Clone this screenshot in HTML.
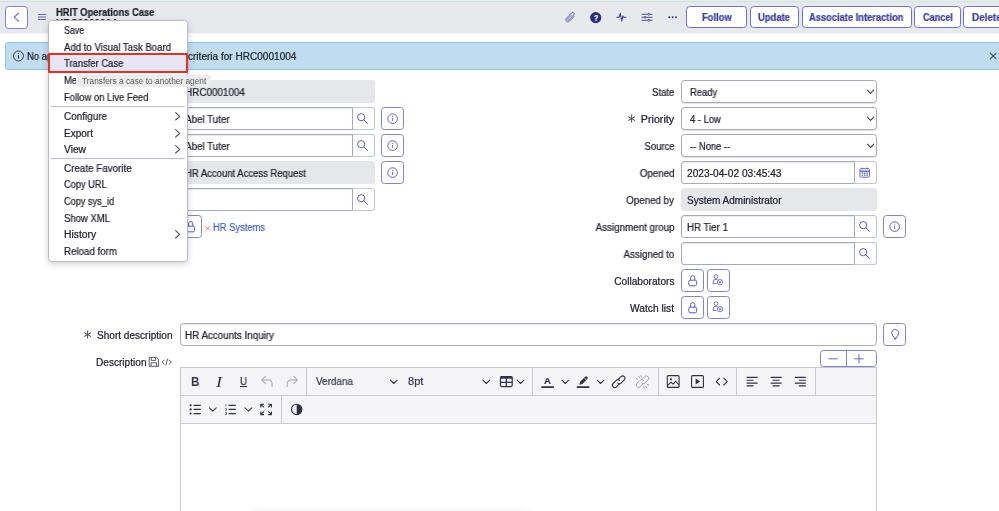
<!DOCTYPE html>
<html lang="en"><head><meta charset="utf-8"><title>HRIT Operations Case | HRC0001004</title>
<style>
html,body{margin:0;padding:0;}
body{width:999px;height:511px;overflow:hidden;position:relative;background:#fff;font-family:"Liberation Sans", sans-serif;}
.t{font-family:"Liberation Sans", sans-serif;}
svg{position:absolute;overflow:visible;}

.in{position:absolute;box-sizing:border-box;background:#fff;border:1px solid #a6a9b9;border-radius:3.5px;box-shadow:inset 0 1px 1px rgba(0,0,0,.09);}
.ro{position:absolute;box-sizing:border-box;background:#e6e7eb;border-radius:3px;}
.ad{position:absolute;box-sizing:border-box;background:#fff;border:1px solid #c4c6d2;border-left:1px solid #a6a9b9;border-radius:0 3px 3px 0;}
.bt{position:absolute;box-sizing:border-box;background:#fff;border:1px solid #7f82d6;border-radius:3.5px;}
.ln{position:absolute;background:#c9cad5;}
.t{-webkit-text-stroke:0.22px currentColor;will-change:transform;}

</style></head><body>
<div style="position:absolute;left:0px;top:0px;width:999px;height:33px;background:#e8e9ed;"></div><div style="position:absolute;left:0px;top:33px;width:999px;height:1px;background:#f6f6f8;"></div><div style="position:absolute;left:0px;top:0px;width:999px;height:1px;background:#dff0ee;"></div><div style="position:absolute;left:0px;top:1px;width:999px;height:1px;background:#d6e2e2;"></div><div class="bt" style="left:5px;top:6px;width:23px;height:23px;"></div><svg style="left:0;top:0" width="40" height="34"><path d="M18.7 13 L14.2 17.2 L18.7 21.4" fill="none" stroke="#6a6dcc" stroke-width="1.1" stroke-linecap="round" stroke-linejoin="round"/></svg><svg style="left:0;top:0" width="60" height="34"><path d="M38 14.5h8M38 17h8M38 19.5h8" stroke="#6163b8" stroke-width="1.1" fill="none"/></svg><span class="t" style="position:absolute;top:7.80px;font-size:10px;line-height:1;font-weight:700;color:#20212e;white-space:pre;left:56.4px;transform-origin:0 50%;transform:scaleX(0.9309);">HRIT Operations Case</span><span class="t" style="position:absolute;top:18.80px;font-size:10px;line-height:1;font-weight:700;color:#20212e;white-space:pre;left:56.4px;transform-origin:0 50%;transform:scaleX(1.0048);">HRC0001004</span><svg style="left:0;top:0" width="999" height="34">
<g fill="none" stroke="#5d60b5" stroke-width="0.9" stroke-linecap="round" stroke-linejoin="round">
<path transform="translate(570.3 17.3) rotate(45)" d="M2.1 -3.2V3.4A2.1 2.1 0 0 1 -2.1 3.4V-4.2A1.45 1.45 0 0 1 0.8 -4.2V3A0.8 0.8 0 0 1 -0.8 3V-2.6"/>
</g>
<circle cx="595.7" cy="17.6" r="5.6" fill="#2b2d80"/>
<g fill="none" stroke="#3b3d96" stroke-width="1.1" stroke-linecap="round" stroke-linejoin="round">
<path d="M616.8 17.2 h2.3 l1.2 -3.8 l1.4 7.6 l1.3 -5 l0.8 1.2 h2.2"/>
<path d="M642 14.3h10M642 17.3h10M642 20.3h10" stroke-width="0.9"/>
</g>
<g fill="#e8e9ed" stroke="#3b3d96" stroke-width="0.8"><circle cx="648.8" cy="14.3" r="0.9"/><circle cx="645" cy="17.3" r="0.9"/><circle cx="648.8" cy="20.3" r="0.9"/></g>
<g fill="#2b2d80"><circle cx="669.2" cy="17.2" r="0.95"/><circle cx="672.6" cy="17.2" r="0.95"/><circle cx="676" cy="17.2" r="0.95"/></g>
</svg><span class="t" style="position:absolute;top:14.05px;font-size:8.5px;line-height:1;font-weight:700;color:#ffffff;white-space:pre;left:593.6px;transform-origin:0 50%;transform:scaleX(0.8264);">?</span><div class="bt" style="left:686px;top:6px;width:61px;height:22px;border-color:#6e71cf;"></div><span class="t" style="position:absolute;top:12.80px;font-size:10px;line-height:1;font-weight:700;color:#3d40a2;white-space:pre;left:702px;transform-origin:0 50%;transform:scaleX(0.9377);">Follow</span><div class="bt" style="left:750px;top:6px;width:49px;height:22px;border-color:#6e71cf;"></div><span class="t" style="position:absolute;top:12.80px;font-size:10px;line-height:1;font-weight:700;color:#3d40a2;white-space:pre;left:758px;transform-origin:0 50%;transform:scaleX(0.9438);">Update</span><div class="bt" style="left:802px;top:6px;width:110px;height:22px;border-color:#6e71cf;"></div><span class="t" style="position:absolute;top:12.80px;font-size:10px;line-height:1;font-weight:700;color:#3d40a2;white-space:pre;left:809.2px;transform-origin:0 50%;transform:scaleX(0.9332);">Associate Interaction</span><div class="bt" style="left:914px;top:6px;width:47px;height:22px;border-color:#6e71cf;"></div><span class="t" style="position:absolute;top:12.80px;font-size:10px;line-height:1;font-weight:700;color:#3d40a2;white-space:pre;left:922.6px;transform-origin:0 50%;transform:scaleX(0.9117);">Cancel</span><div class="bt" style="left:963px;top:6px;width:47px;height:22px;border-color:#6e71cf;"></div><span class="t" style="position:absolute;top:12.80px;font-size:10px;line-height:1;font-weight:700;color:#3d40a2;white-space:pre;left:971.6px;transform-origin:0 50%;transform:scaleX(0.9862);">Delete</span><div style="position:absolute;box-sizing:border-box;left:5px;top:42px;width:1010px;height:28px;background:#bfdcf1;border:1px solid #8ec4ea;border-radius:3px;"></div><svg style="left:0;top:0" width="999" height="80">
<circle cx="18.5" cy="56" r="5" fill="none" stroke="#2c2f45" stroke-width="0.9"/>
<path d="M18.5 55.2v3.4" stroke="#2c2f45" stroke-width="1" fill="none"/><circle cx="18.5" cy="53.5" r="0.6" fill="#2c2f45"/>
<path d="M990.1 52.9l6.3 6.3M996.4 52.9l-6.3 6.3" stroke="#3d3f8a" stroke-width="1.05" fill="none"/>
</svg><span class="t" style="position:absolute;top:51.80px;font-size:10px;line-height:1;font-weight:400;color:#20212e;white-space:pre;left:27.2px;transform-origin:0 50%;transform:scaleX(0.9400);">No agents satisfy the assignment</span><span class="t" style="position:absolute;top:51.80px;font-size:10px;line-height:1;font-weight:400;color:#20212e;white-space:pre;left:188.2px;transform-origin:0 50%;transform:scaleX(1.0053);">criteria for HRC0001004</span><div class="ro" style="left:180px;top:80px;width:194.5px;height:23px;"></div><span class="t" style="position:absolute;top:87.80px;font-size:10px;line-height:1;font-weight:400;color:#20212e;white-space:pre;left:185px;transform-origin:0 50%;transform:scaleX(0.9883);">HRC0001004</span><div class="in" style="left:180px;top:107px;width:173px;height:23px;border-radius:3px 0 0 3px;"></div><div class="ad" style="left:352px;top:107px;width:23px;height:23px;"></div><svg style="left:356.4px;top:112.3px" width="14" height="14"><circle cx="5.2" cy="5.2" r="3.6" fill="none" stroke="#5a5dc6" stroke-width="1"/><path d="M7.9 7.9l3.6 3.6" stroke="#5a5dc6" stroke-width="1" stroke-linecap="round"/></svg><div class="bt" style="left:381px;top:107px;width:23px;height:23px;"></div><svg style="left:380.9px;top:106.9px" width="24" height="24"><circle cx="11.6" cy="11.6" r="4.8" fill="none" stroke="#5a5dc6" stroke-width="0.95"/><path d="M11.6 10.8v3.2" stroke="#5a5dc6" stroke-width="0.9"/><circle cx="11.6" cy="9.2" r="0.55" fill="#5a5dc6"/></svg><span class="t" style="position:absolute;top:114.80px;font-size:10px;line-height:1;font-weight:400;color:#20212e;white-space:pre;left:185px;transform-origin:0 50%;transform:scaleX(0.9804);">Abel Tuter</span><div class="in" style="left:180px;top:134px;width:173px;height:23px;border-radius:3px 0 0 3px;"></div><div class="ad" style="left:352px;top:134px;width:23px;height:23px;"></div><svg style="left:356.4px;top:139.3px" width="14" height="14"><circle cx="5.2" cy="5.2" r="3.6" fill="none" stroke="#5a5dc6" stroke-width="1"/><path d="M7.9 7.9l3.6 3.6" stroke="#5a5dc6" stroke-width="1" stroke-linecap="round"/></svg><div class="bt" style="left:381px;top:134px;width:23px;height:23px;"></div><svg style="left:380.9px;top:133.9px" width="24" height="24"><circle cx="11.6" cy="11.6" r="4.8" fill="none" stroke="#5a5dc6" stroke-width="0.95"/><path d="M11.6 10.8v3.2" stroke="#5a5dc6" stroke-width="0.9"/><circle cx="11.6" cy="9.2" r="0.55" fill="#5a5dc6"/></svg><span class="t" style="position:absolute;top:141.80px;font-size:10px;line-height:1;font-weight:400;color:#20212e;white-space:pre;left:185px;transform-origin:0 50%;transform:scaleX(0.9804);">Abel Tuter</span><div class="ro" style="left:180px;top:161px;width:194.5px;height:23px;"></div><div class="bt" style="left:381px;top:161px;width:23px;height:23px;"></div><svg style="left:380.9px;top:160.9px" width="24" height="24"><circle cx="11.6" cy="11.6" r="4.8" fill="none" stroke="#5a5dc6" stroke-width="0.95"/><path d="M11.6 10.8v3.2" stroke="#5a5dc6" stroke-width="0.9"/><circle cx="11.6" cy="9.2" r="0.55" fill="#5a5dc6"/></svg><span class="t" style="position:absolute;top:168.80px;font-size:10px;line-height:1;font-weight:400;color:#20212e;white-space:pre;left:185px;transform-origin:0 50%;transform:scaleX(0.9490);">HR Account Access Request</span><div class="in" style="left:180px;top:188px;width:173px;height:23px;border-radius:3px 0 0 3px;"></div><div class="ad" style="left:352px;top:188px;width:23px;height:23px;"></div><svg style="left:356.4px;top:193.3px" width="14" height="14"><circle cx="5.2" cy="5.2" r="3.6" fill="none" stroke="#5a5dc6" stroke-width="1"/><path d="M7.9 7.9l3.6 3.6" stroke="#5a5dc6" stroke-width="1" stroke-linecap="round"/></svg><div class="bt" style="left:179px;top:215px;width:23px;height:23px;"></div><svg style="left:178.9px;top:215.1px" width="24" height="24"><rect x="7.8" y="11.2" width="7.8" height="5.6" rx="1.3" fill="none" stroke="#5a5dc6" stroke-width="1"/><path d="M9.6 11.2v-2.5a2.1 2.1 0 0 1 4.2 0v2.5" fill="none" stroke="#5a5dc6" stroke-width="1"/></svg><svg style="left:0;top:0" width="300" height="300"><path d="M205.8 226.4l4 4M209.8 226.4l-4 4" stroke="#ef6a6a" stroke-width="0.9"/></svg><span class="t" style="position:absolute;top:222.80px;font-size:10px;line-height:1;font-weight:400;color:#3f62d8;white-space:pre;left:213px;transform-origin:0 50%;transform:scaleX(0.9359);">HR Systems</span><span class="t" style="position:absolute;top:87.80px;font-size:10px;line-height:1;font-weight:400;color:#20212e;white-space:pre;right:324.70000000000005px;transform-origin:100% 50%;transform:scaleX(0.9546);">State</span><div class="in" style="left:681px;top:80px;width:196px;height:23px;box-shadow:0 1px 1px rgba(0,0,0,.12);"></div><svg style="left:864.8px;top:88px" width="10" height="8"><path d="M2.4 2.2l3.15 3.2l3.15-3.2" fill="none" stroke="#44465a" stroke-width="1.1" stroke-linecap="round" stroke-linejoin="round"/></svg><span class="t" style="position:absolute;top:87.80px;font-size:10px;line-height:1;font-weight:400;color:#20212e;white-space:pre;left:689.7px;transform-origin:0 50%;transform:scaleX(0.9400);">Ready</span><span class="t" style="position:absolute;top:114.80px;font-size:10px;line-height:1;font-weight:400;color:#20212e;white-space:pre;right:324.70000000000005px;transform-origin:100% 50%;transform:scaleX(1.0699);">Priority</span><div class="in" style="left:681px;top:107px;width:196px;height:23px;box-shadow:0 1px 1px rgba(0,0,0,.12);"></div><svg style="left:864.8px;top:115px" width="10" height="8"><path d="M2.4 2.2l3.15 3.2l3.15-3.2" fill="none" stroke="#44465a" stroke-width="1.1" stroke-linecap="round" stroke-linejoin="round"/></svg><span class="t" style="position:absolute;top:114.80px;font-size:10px;line-height:1;font-weight:400;color:#20212e;white-space:pre;left:689.7px;transform-origin:0 50%;transform:scaleX(0.9400);">4 - Low</span><svg style="left:627px;top:113.6px" width="10" height="10"><path d="M4.6 0.6v8M1.1 2.6l7 4M8.1 2.6l-7 4" stroke="#3f4154" stroke-width="0.95" fill="none"/></svg><span class="t" style="position:absolute;top:141.80px;font-size:10px;line-height:1;font-weight:400;color:#20212e;white-space:pre;right:324.70000000000005px;transform-origin:100% 50%;transform:scaleX(0.9562);">Source</span><div class="in" style="left:681px;top:134px;width:196px;height:23px;box-shadow:0 1px 1px rgba(0,0,0,.12);"></div><svg style="left:864.8px;top:142px" width="10" height="8"><path d="M2.4 2.2l3.15 3.2l3.15-3.2" fill="none" stroke="#44465a" stroke-width="1.1" stroke-linecap="round" stroke-linejoin="round"/></svg><span class="t" style="position:absolute;top:141.80px;font-size:10px;line-height:1;font-weight:400;color:#20212e;white-space:pre;left:689.7px;transform-origin:0 50%;transform:scaleX(0.9400);">-- None --</span><span class="t" style="position:absolute;top:168.80px;font-size:10px;line-height:1;font-weight:400;color:#20212e;white-space:pre;right:324.70000000000005px;transform-origin:100% 50%;transform:scaleX(0.9777);">Opened</span><div class="in" style="left:681px;top:161px;width:174px;height:23px;border-radius:3px 0 0 3px;"></div><div class="ad" style="left:854px;top:161px;width:23px;height:23px;"></div><svg style="left:858.7px;top:166.6px" width="12" height="12"><rect x="0.9" y="1.6" width="9.6" height="8.6" rx="1.2" fill="none" stroke="#5a5dc6" stroke-width="0.9"/><path d="M0.9 4.2h9.6" stroke="#5a5dc6" stroke-width="1.3"/><path d="M3.2 0.6v1.8M8.2 0.6v1.8" stroke="#5a5dc6" stroke-width="0.9"/><path d="M2.6 6.1h1.5M5 6.1h1.5M7.4 6.1h1.5M2.6 8.1h1.5M5 8.1h1.5M7.4 8.1h1.5" stroke="#5a5dc6" stroke-width="1.1"/></svg><span class="t" style="position:absolute;top:168.80px;font-size:10px;line-height:1;font-weight:400;color:#20212e;white-space:pre;left:686.5px;transform-origin:0 50%;transform:scaleX(1.0177);">2023-04-02 03:45:43</span><span class="t" style="position:absolute;top:195.80px;font-size:10px;line-height:1;font-weight:400;color:#20212e;white-space:pre;right:324.70000000000005px;transform-origin:100% 50%;transform:scaleX(0.9747);">Opened by</span><div class="ro" style="left:681px;top:188px;width:195.5px;height:23px;"></div><span class="t" style="position:absolute;top:195.80px;font-size:10px;line-height:1;font-weight:400;color:#20212e;white-space:pre;left:686.5px;transform-origin:0 50%;transform:scaleX(1.0002);">System Administrator</span><span class="t" style="position:absolute;top:222.80px;font-size:10px;line-height:1;font-weight:400;color:#20212e;white-space:pre;right:324.70000000000005px;transform-origin:100% 50%;transform:scaleX(0.9800);">Assignment group</span><div class="in" style="left:681px;top:215px;width:174px;height:23px;border-radius:3px 0 0 3px;"></div><div class="ad" style="left:854px;top:215px;width:23px;height:23px;"></div><svg style="left:858.4px;top:220.3px" width="14" height="14"><circle cx="5.2" cy="5.2" r="3.6" fill="none" stroke="#5a5dc6" stroke-width="1"/><path d="M7.9 7.9l3.6 3.6" stroke="#5a5dc6" stroke-width="1" stroke-linecap="round"/></svg><div class="bt" style="left:883px;top:215px;width:23px;height:23px;"></div><svg style="left:882.9px;top:214.9px" width="24" height="24"><circle cx="11.6" cy="11.6" r="4.8" fill="none" stroke="#5a5dc6" stroke-width="0.95"/><path d="M11.6 10.8v3.2" stroke="#5a5dc6" stroke-width="0.9"/><circle cx="11.6" cy="9.2" r="0.55" fill="#5a5dc6"/></svg><span class="t" style="position:absolute;top:222.80px;font-size:10px;line-height:1;font-weight:400;color:#20212e;white-space:pre;left:686.5px;transform-origin:0 50%;transform:scaleX(0.9684);">HR Tier 1</span><span class="t" style="position:absolute;top:249.80px;font-size:10px;line-height:1;font-weight:400;color:#20212e;white-space:pre;right:324.70000000000005px;transform-origin:100% 50%;transform:scaleX(0.9700);">Assigned to</span><div class="in" style="left:681px;top:242px;width:174px;height:23px;border-radius:3px 0 0 3px;"></div><div class="ad" style="left:854px;top:242px;width:23px;height:23px;"></div><svg style="left:858.4px;top:247.3px" width="14" height="14"><circle cx="5.2" cy="5.2" r="3.6" fill="none" stroke="#5a5dc6" stroke-width="1"/><path d="M7.9 7.9l3.6 3.6" stroke="#5a5dc6" stroke-width="1" stroke-linecap="round"/></svg><span class="t" style="position:absolute;top:276.80px;font-size:10px;line-height:1;font-weight:400;color:#20212e;white-space:pre;right:324.70000000000005px;transform-origin:100% 50%;transform:scaleX(1.0137);">Collaborators</span><div class="bt" style="left:681px;top:269px;width:23px;height:23px;"></div><svg style="left:680.9px;top:268.9px" width="24" height="24"><rect x="7.8" y="11.2" width="7.8" height="5.6" rx="1.3" fill="none" stroke="#5a5dc6" stroke-width="1"/><path d="M9.6 11.2v-2.5a2.1 2.1 0 0 1 4.2 0v2.5" fill="none" stroke="#5a5dc6" stroke-width="1"/></svg><div class="bt" style="left:707px;top:269px;width:23px;height:23px;"></div><svg style="left:706.1px;top:268.4px" width="24" height="24"><circle cx="10" cy="8.6" r="1.9" fill="none" stroke="#5a5dc6" stroke-width="0.85"/><path d="M7.2 15.6v-1.6a2.6 2.6 0 0 1 2.8 -2.6a3 3 0 0 1 1.6 0.4" fill="none" stroke="#5a5dc6" stroke-width="0.85"/><path d="M7.2 15.6h3.4" stroke="#5a5dc6" stroke-width="0.85"/><circle cx="14" cy="14.2" r="2.7" fill="none" stroke="#5a5dc6" stroke-width="0.8"/><path d="M14 12.8v2.8M12.6 14.2h2.8" stroke="#5a5dc6" stroke-width="0.8"/></svg><span class="t" style="position:absolute;top:303.80px;font-size:10px;line-height:1;font-weight:400;color:#20212e;white-space:pre;right:324.70000000000005px;transform-origin:100% 50%;transform:scaleX(1.0217);">Watch list</span><div class="bt" style="left:681px;top:296px;width:23px;height:23px;"></div><svg style="left:680.9px;top:295.9px" width="24" height="24"><rect x="7.8" y="11.2" width="7.8" height="5.6" rx="1.3" fill="none" stroke="#5a5dc6" stroke-width="1"/><path d="M9.6 11.2v-2.5a2.1 2.1 0 0 1 4.2 0v2.5" fill="none" stroke="#5a5dc6" stroke-width="1"/></svg><div class="bt" style="left:707px;top:296px;width:23px;height:23px;"></div><svg style="left:706.1px;top:295.4px" width="24" height="24"><circle cx="10" cy="8.6" r="1.9" fill="none" stroke="#5a5dc6" stroke-width="0.85"/><path d="M7.2 15.6v-1.6a2.6 2.6 0 0 1 2.8 -2.6a3 3 0 0 1 1.6 0.4" fill="none" stroke="#5a5dc6" stroke-width="0.85"/><path d="M7.2 15.6h3.4" stroke="#5a5dc6" stroke-width="0.85"/><circle cx="14" cy="14.2" r="2.7" fill="none" stroke="#5a5dc6" stroke-width="0.8"/><path d="M14 12.8v2.8M12.6 14.2h2.8" stroke="#5a5dc6" stroke-width="0.8"/></svg><svg style="left:83.4px;top:330.4px" width="10" height="10"><path d="M4.6 0.6v8M1.1 2.6l7 4M8.1 2.6l-7 4" stroke="#3f4154" stroke-width="0.95" fill="none"/></svg><span class="t" style="position:absolute;top:330.80px;font-size:10px;line-height:1;font-weight:400;color:#20212e;white-space:pre;left:97px;transform-origin:0 50%;transform:scaleX(1.0060);">Short description</span><div class="in" style="left:180px;top:323px;width:697px;height:23px;"></div><span class="t" style="position:absolute;top:330.80px;font-size:10px;line-height:1;font-weight:400;color:#20212e;white-space:pre;left:185px;transform-origin:0 50%;transform:scaleX(0.9822);">HR Accounts Inquiry</span><div class="bt" style="left:883px;top:323px;width:23px;height:23px;"></div><svg style="left:882.6px;top:323px" width="24" height="24"><path d="M12.2 16.4L9.35 12A3.5 3.5 0 1 1 15.05 12Z" fill="none" stroke="#5a5dc6" stroke-width="0.95" stroke-linejoin="round"/><path d="M12.2 16.4l-1-1.6h2z" fill="#5a5dc6"/></svg><span class="t" style="position:absolute;top:357.80px;font-size:10px;line-height:1;font-weight:400;color:#20212e;white-space:pre;left:96px;transform-origin:0 50%;transform:scaleX(1.0094);">Description</span><svg style="left:148px;top:355px" width="30" height="14"><g fill="none" stroke="#4b4d60" stroke-width="0.9" stroke-linejoin="round"><path d="M1.2 2.4h7.4l1.9 1.9v7h-9.3z"/><path d="M3.2 2.4v3h4.4v-3M3 11.3V7.8h5.6v3.5"/><path d="M16.4 4.8l-2.3 2.3l2.3 2.3M21 4.8l2.3 2.3l-2.3 2.3M19.7 3.8l-2 6.6"/></g></svg><div class="bt" style="left:820px;top:350px;width:57px;height:17px;"></div><div style="position:absolute;left:846px;top:350px;width:1px;height:17px;background:#7f82d6;"></div><svg style="left:820px;top:350px" width="57" height="18"><path d="M8.4 8.8h9.4M34.3 8.8h9.4M39 4.2v9.2" stroke="#5a5dc6" stroke-width="0.95" fill="none"/></svg><div style="position:absolute;box-sizing:border-box;left:180px;top:367px;width:697px;height:160px;border:1px solid #c6c8d3;background:#fff;"></div><div style="position:absolute;left:181px;top:368px;width:695px;height:55px;background:#f5f5f8;"></div><div class="ln" style="left:181px;top:395px;width:695px;height:1px;"></div><div class="ln" style="left:181px;top:423px;width:695px;height:1px;"></div><div class="ln" style="left:306px;top:368px;width:1px;height:27px;"></div><div class="ln" style="left:532px;top:368px;width:1px;height:27px;"></div><div class="ln" style="left:658px;top:368px;width:1px;height:27px;"></div><div class="ln" style="left:736px;top:368px;width:1px;height:27px;"></div><div class="ln" style="left:815px;top:368px;width:1px;height:27px;"></div><div class="ln" style="left:281px;top:396px;width:1px;height:27px;"></div><svg style="left:0;top:0" width="999" height="511"><g fill="none" stroke="#a0a2ae" stroke-width="1.05" stroke-linecap="round" stroke-linejoin="round"><path d="M265.4 376.4l-3.6 3.6l3.6 3.6"/><path d="M262 380h6.2a3.9 3.9 0 0 1 3.9 3.9v2.6"/><path d="M293.8 376.4l3.6 3.6l-3.6 3.6"/><path d="M297.2 380h-6.2a3.9 3.9 0 0 0 -3.9 3.9v2.6"/></g><path d="M240 386.5h7" stroke="#2e3245" stroke-width="1.1"/><path d="M390.4 380.2l3.4 3.3l3.4 -3.3" fill="none" stroke="#2e3245" stroke-width="1.05" stroke-linecap="round" stroke-linejoin="round"/><path d="M482.9 380.2l3.4 3.3l3.4 -3.3" fill="none" stroke="#2e3245" stroke-width="1.05" stroke-linecap="round" stroke-linejoin="round"/><path d="M517.2 380.2l3.4 3.3l3.4 -3.3" fill="none" stroke="#2e3245" stroke-width="1.05" stroke-linecap="round" stroke-linejoin="round"/><path d="M561.9 380.2l3.4 3.3l3.4 -3.3" fill="none" stroke="#2e3245" stroke-width="1.05" stroke-linecap="round" stroke-linejoin="round"/><path d="M597.2 380.2l3.4 3.3l3.4 -3.3" fill="none" stroke="#2e3245" stroke-width="1.05" stroke-linecap="round" stroke-linejoin="round"/><g fill="none" stroke="#2e3245" stroke-width="1.25" stroke-linejoin="round"><rect x="500.5" y="376.5" width="11.7" height="10" rx="1.2"/><path d="M500.5 382.4h11.7M506.35 378.4v8.1"/></g><rect x="500.5" y="376.5" width="11.7" height="2.2" fill="#2e3245"/><path d="M541.3 387.1h12.6M576.8 387.1h12.6" stroke="#2e3245" stroke-width="1.7"/><path d="M579.4 384.4l0.7-2.6l5-5a1.3 1.3 0 0 1 1.8 0l0.5 0.5a1.3 1.3 0 0 1 0 1.8l-5 5l-2.6 0.7z" fill="#2e3245"/><path d="M584 377.6l2.6 2.6" stroke="#f5f5f8" stroke-width="0.7"/><g fill="none" stroke="#2e3245" stroke-width="1.15" stroke-linecap="round"><path d="M618.4 379.2l2.6-2.6a2.3 2.3 0 0 1 3.3 3.3l-3.2 3.2a2.3 2.3 0 0 1 -3.3 0"/><path d="M619 384.2l-2.6 2.6a2.3 2.3 0 0 1 -3.3 -3.3l3.2-3.2a2.3 2.3 0 0 1 3.3 0"/></g><g fill="none" stroke="#a0a2ae" stroke-width="1.0" stroke-linecap="round"><path d="M642.2 379.2l2.6-2.6a2.3 2.3 0 0 1 3.3 3.3l-3.2 3.2a2.3 2.3 0 0 1 -3.3 0"/><path d="M642.8 384.2l-2.6 2.6a2.3 2.3 0 0 1 -3.3 -3.3l3.2-3.2a2.3 2.3 0 0 1 3.3 0"/><path d="M638.6 376.2l1 1.4M636.4 378.6l1.5 0.8M641 375.6l0.3 1.5M646.6 387.6l-1-1.4M648.8 385.2l-1.5-0.8M644.2 388.2l-0.3-1.5"/></g><g fill="none" stroke="#2e3245" stroke-width="1.1" stroke-linejoin="round"><rect x="667.3" y="375.6" width="11.8" height="11.8" rx="1"/><path d="M667.6 385.6l3.4-3.4l2 2l2.6-2.8l3.3 3.3"/></g><circle cx="671" cy="379.3" r="1.1" fill="#2e3245"/><rect x="691.6" y="375.6" width="11.8" height="11.8" rx="1" fill="none" stroke="#2e3245" stroke-width="1.1"/><path d="M695.6 378.6l4.6 2.9l-4.6 2.9z" fill="#2e3245"/><g fill="none" stroke="#2e3245" stroke-width="1.1" stroke-linecap="round" stroke-linejoin="round"><path d="M719.6 378.2l-3.4 3.4l3.4 3.4M723.8 378.2l3.4 3.4l-3.4 3.4"/></g><g stroke="#2e3245" stroke-width="1.1" fill="none"><path d="M746.6 377.4h11M746.6 380.3h7M746.6 383.1h11M746.6 385.9h7"/><path d="M770.6 377.4h11M772.6 380.3h7M770.6 383.1h11M772.6 385.9h7"/><path d="M794.8 377.4h11M798.8 380.3h7M794.8 383.1h11M798.8 385.9h7"/></g><g stroke="#2e3245" stroke-width="1.25" fill="none"><path d="M193.6 405.3h7.2M193.6 409.4h7.2M193.6 413.5h7.2"/><path d="M228.6 405.3h7.2M228.6 409.4h7.2M228.6 413.5h7.2"/></g><g fill="#2e3245"><circle cx="190.6" cy="405.3" r="1.1"/><circle cx="190.6" cy="409.4" r="1.1"/><circle cx="190.6" cy="413.5" r="1.1"/></g><path d="M225.8 404.2v2.2M225.2 408.4h1.2v2h-1.2M225.2 412.4h1.2v2.2h-1.2" stroke="#2e3245" stroke-width="0.7" fill="none"/><path d="M209.4 407.8l3.4 3.3l3.4 -3.3" fill="none" stroke="#2e3245" stroke-width="1.05" stroke-linecap="round" stroke-linejoin="round"/><path d="M245 407.8l3.4 3.3l3.4 -3.3" fill="none" stroke="#2e3245" stroke-width="1.05" stroke-linecap="round" stroke-linejoin="round"/><g fill="none" stroke="#2e3245" stroke-width="1.1" stroke-linejoin="round"><path d="M260.8 407.4v-3.2h3.2M261 404.4l3 3M268.2 404.2h3.2v3.2M271.2 404.4l-3 3M260.8 411.4v3.2h3.2M261 414.4l3-3M268.2 414.6h3.2v-3.2M271.2 414.4l-3-3"/></g><circle cx="296.7" cy="409.4" r="5.2" fill="none" stroke="#2e3245" stroke-width="1.1"/><path d="M296.7 404.2a5.2 5.2 0 0 1 0 10.4z" fill="#2e3245"/></svg><span class="t" style="position:absolute;top:376.40px;font-size:12.8px;line-height:1;font-weight:700;color:#2e3245;white-space:pre;-webkit-text-stroke:0;left:191px;transform-origin:0 50%;transform:scaleX(0.9081);">B</span><span class="t" style="position:absolute;top:376.30px;font-size:14px;line-height:1;font-weight:400;color:#2e3245;white-space:pre;font-family:'Liberation Serif',serif;font-style:italic;-webkit-text-stroke:0;left:216.4px;transform-origin:0 50%;transform:scaleX(1.2843);">I</span><span class="t" style="position:absolute;top:376.00px;font-size:10.6px;line-height:1;font-weight:400;color:#2e3245;white-space:pre;left:239.9px;transform-origin:0 50%;transform:scaleX(0.9273);">U</span><span class="t" style="position:absolute;top:376.80px;font-size:10px;line-height:1;font-weight:400;color:#363a4e;white-space:pre;left:316.2px;transform-origin:0 50%;transform:scaleX(0.9875);">Verdana</span><span class="t" style="position:absolute;top:376.80px;font-size:10px;line-height:1;font-weight:400;color:#363a4e;white-space:pre;left:408.3px;transform-origin:0 50%;transform:scaleX(1.1074);">8pt</span><span class="t" style="position:absolute;top:376.00px;font-size:9.6px;line-height:1;font-weight:700;color:#2e3245;white-space:pre;left:544.2px;transform-origin:0 50%;transform:scaleX(0.9802);">A</span><div style="position:absolute;box-sizing:border-box;left:48px;top:20px;width:140px;height:242px;background:#fff;border:1px solid #b9bbc9;border-radius:3.5px;box-shadow:0 2px 6px rgba(20,20,50,.2);"></div><div style="position:absolute;box-sizing:border-box;left:48px;top:53px;width:140px;height:20px;background:#e5e5f5;border:2px solid #ec2f17;border-radius:1px;"></div><span class="t" style="position:absolute;top:25.80px;font-size:10px;line-height:1;font-weight:400;color:#1c1d2a;white-space:pre;left:64px;transform-origin:0 50%;transform:scaleX(0.8817);">Save</span><span class="t" style="position:absolute;top:42.80px;font-size:10px;line-height:1;font-weight:400;color:#1c1d2a;white-space:pre;left:64px;transform-origin:0 50%;transform:scaleX(0.9607);">Add to Visual Task Board</span><span class="t" style="position:absolute;top:58.80px;font-size:10px;line-height:1;font-weight:400;color:#1c1d2a;white-space:pre;left:64px;transform-origin:0 50%;transform:scaleX(0.9415);">Transfer Case</span><span class="t" style="position:absolute;top:75.80px;font-size:10px;line-height:1;font-weight:400;color:#1c1d2a;white-space:pre;left:64px;transform-origin:0 50%;transform:scaleX(0.9400);">Metrics Timeline</span><span class="t" style="position:absolute;top:92.80px;font-size:10px;line-height:1;font-weight:400;color:#1c1d2a;white-space:pre;left:64px;transform-origin:0 50%;transform:scaleX(0.9441);">Follow on Live Feed</span><span class="t" style="position:absolute;top:111.80px;font-size:10px;line-height:1;font-weight:400;color:#1c1d2a;white-space:pre;left:64px;transform-origin:0 50%;transform:scaleX(0.9917);">Configure</span><span class="t" style="position:absolute;top:128.80px;font-size:10px;line-height:1;font-weight:400;color:#1c1d2a;white-space:pre;left:64px;transform-origin:0 50%;transform:scaleX(1.0032);">Export</span><span class="t" style="position:absolute;top:144.80px;font-size:10px;line-height:1;font-weight:400;color:#1c1d2a;white-space:pre;left:64px;transform-origin:0 50%;transform:scaleX(1.0233);">View</span><span class="t" style="position:absolute;top:163.80px;font-size:10px;line-height:1;font-weight:400;color:#1c1d2a;white-space:pre;left:64px;transform-origin:0 50%;transform:scaleX(0.9837);">Create Favorite</span><span class="t" style="position:absolute;top:179.80px;font-size:10px;line-height:1;font-weight:400;color:#1c1d2a;white-space:pre;left:64px;transform-origin:0 50%;transform:scaleX(0.9276);">Copy URL</span><span class="t" style="position:absolute;top:196.80px;font-size:10px;line-height:1;font-weight:400;color:#1c1d2a;white-space:pre;left:64px;transform-origin:0 50%;transform:scaleX(0.9198);">Copy sys_id</span><span class="t" style="position:absolute;top:213.80px;font-size:10px;line-height:1;font-weight:400;color:#1c1d2a;white-space:pre;left:64px;transform-origin:0 50%;transform:scaleX(0.9512);">Show XML</span><span class="t" style="position:absolute;top:229.80px;font-size:10px;line-height:1;font-weight:400;color:#1c1d2a;white-space:pre;left:64px;transform-origin:0 50%;transform:scaleX(1.0345);">History</span><span class="t" style="position:absolute;top:246.80px;font-size:10px;line-height:1;font-weight:400;color:#1c1d2a;white-space:pre;left:64px;transform-origin:0 50%;transform:scaleX(0.9712);">Reload form</span><svg style="left:0;top:0" width="260" height="280"><path d="M175.6 112.6l4.1 3.7l-4.1 3.7" fill="none" stroke="#4a4c60" stroke-width="1.1" stroke-linecap="round" stroke-linejoin="round"/><path d="M175.6 129.6l4.1 3.7l-4.1 3.7" fill="none" stroke="#4a4c60" stroke-width="1.1" stroke-linecap="round" stroke-linejoin="round"/><path d="M175.6 145.6l4.1 3.7l-4.1 3.7" fill="none" stroke="#4a4c60" stroke-width="1.1" stroke-linecap="round" stroke-linejoin="round"/><path d="M175.6 230.6l4.1 3.7l-4.1 3.7" fill="none" stroke="#4a4c60" stroke-width="1.1" stroke-linecap="round" stroke-linejoin="round"/><path d="M51 106.6h133.5M51 158.6h133.5" stroke="#b5b8c8" stroke-width="1"/></svg><div style="position:absolute;left:76px;top:75px;width:135px;height:12px;background:#ececec;border-radius:3px;"></div><span class="t" style="position:absolute;top:77.15px;font-size:8.3px;line-height:1;font-weight:400;color:#5a5a5a;white-space:pre;-webkit-text-stroke:0;left:81.6px;transform-origin:0 50%;transform:scaleX(0.9998);">Transfers a case to another agent</span><div style="position:absolute;left:255px;top:514px;width:270px;height:8px;box-shadow:0 0 9px 3px rgba(0,0,0,.07);"></div>
</body></html>
